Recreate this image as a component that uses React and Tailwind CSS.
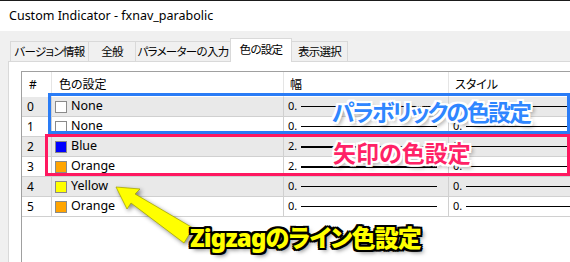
import React from "react";

const rows = [
  { idx: 0, name: "None", swatch: "bg-white", width: "0.", thick: false },
  { idx: 1, name: "None", swatch: "bg-white", width: "0.", thick: false },
  { idx: 2, name: "Blue", swatch: "bg-[#0000ff]", width: "2.", thick: true },
  { idx: 3, name: "Orange", swatch: "bg-[#ffa500]", width: "2.", thick: true },
  { idx: 4, name: "Yellow", swatch: "bg-[#ffff00]", width: "0.", thick: false },
  { idx: 5, name: "Orange", swatch: "bg-[#ffa500]", width: "0.", thick: false },
];

const tabs = [
  { label: "バージョン情報", w: "w-[79px]" },
  { label: "全般", w: "w-[48px]" },
  { label: "パラメーターの入力", w: "w-[96px]" },
];

export default function App() {
  return (
    <div className="relative w-[570px] h-[262px] overflow-hidden bg-[#f0f0f0] text-black font-['Noto_Sans','Noto_Sans_CJK_JP',sans-serif] [font-feature-settings:'palt']">
      <div className="h-px bg-[#1b1b1b]" />
      {/* title bar */}
      <div className="h-[30px] bg-white flex items-center pl-[9px] text-[12.5px]">
        Custom Indicator - fxnav_parabolic
      </div>

      <div className="pl-[8px] pt-[7px]">
        {/* tabs */}
        <div className="flex items-end h-[23px] pl-[2px] text-[11.5px] whitespace-nowrap tracking-[-0.7px]">
          {tabs.map((t) => (
            <div
              key={t.label}
              className={`${t.w} h-[20px] flex items-center justify-center border border-b-0 border-[#d9d9d9] -ml-px first:ml-0 bg-[#f0f0f0]`}
            >
              {t.label}
            </div>
          ))}
          <div className="relative z-10 w-[62px] h-[24px] -mb-px flex items-center justify-center border border-b-0 border-[#d9d9d9] bg-white -ml-px pb-[2px]">
            色の設定
          </div>
          <div className="w-[57px] h-[20px] flex items-center justify-center border border-b-0 border-[#d9d9d9] -ml-px bg-[#f0f0f0]">
            表示選択
          </div>
        </div>

        {/* panel */}
        <div className="h-[210px] bg-white border-l border-t border-[#d9d9d9] pl-[12px] pt-[9px]">
          <div className="w-[600px] h-[200px] border-l border-t border-[#a0a0a0] text-[12px]">
            {/* header */}
            <div className="flex h-[25px] bg-white">
              <div className="w-[30px] border-r border-[#e5e5e5] flex items-center pl-[7px]">#</div>
              <div className="w-[232px] border-r border-[#e5e5e5] flex items-center pl-[7px]">色の設定</div>
              <div className="w-[165px] border-r border-[#e5e5e5] flex items-center pl-[6px]">幅</div>
              <div className="flex-1 flex items-center pl-[6px]">スタイル</div>
            </div>
            {rows.map((r) => (
              <div
                key={r.idx}
                className={`flex h-[20px] border-b border-[#d0d0d0] ${r.idx % 2 === 0 ? "bg-[#e9e9e9]" : "bg-white"}`}
              >
                <div className="w-[30px] border-r border-[#d0d0d0] flex items-center pl-[5px]">{r.idx}</div>
                <div className="w-[232px] border-r border-[#d0d0d0] flex items-center pl-[3px] gap-[4px]">
                  <span className={`w-[12px] h-[12px] border border-[#8a8a8a] ${r.swatch}`} />
                  <span className="text-[12.5px]">{r.name}</span>
                </div>
                <div className="w-[165px] border-r border-[#d0d0d0] flex items-center pl-[4px] gap-[3px] text-[11px]">
                  <span className="w-[10px]">{r.width}</span>
                  <span className={`w-[136px] bg-black ${r.thick ? "h-[2px]" : "h-px"}`} />
                </div>
                <div className="flex-1 flex items-center pl-[4px] gap-[3px] text-[11px]">
                  <span className="w-[10px]">0.</span>
                  <span className="w-[140px] h-px bg-black" />
                </div>
              </div>
            ))}
          </div>
        </div>
      </div>

      {/* annotations */}
      <div className="absolute left-[48px] top-[93px] w-[522px] h-[41px] border-[3px] border-[#2a7cf6]" />
      <div className="absolute left-[45px] top-[134px] w-[525px] h-[42px] border-[3px] border-[#ff1860]" />

      <div className="absolute left-[332px] top-[101px] text-[23px] font-bold leading-none tracking-[-2px] text-[#2f86ff] [text-shadow:2px_0_0_#fff,-2px_0_0_#fff,0_2px_0_#fff,0_-2px_0_#fff,2px_2px_0_#fff,-2px_-2px_0_#fff,2px_-2px_0_#fff,-2px_2px_0_#fff,3px_3px_4px_rgba(0,0,0,0.45)]">
        パラボリックの色設定
      </div>
      <div className="absolute left-[333px] top-[142px] text-[23px] font-bold leading-none text-[#ff2266] [text-shadow:2px_0_0_#fff,-2px_0_0_#fff,0_2px_0_#fff,0_-2px_0_#fff,2px_2px_0_#fff,-2px_-2px_0_#fff,2px_-2px_0_#fff,-2px_2px_0_#fff,3px_3px_4px_rgba(0,0,0,0.45)]">
        矢印の色設定
      </div>

      <svg className="absolute left-0 top-0 w-[570px] h-[262px] pointer-events-none" viewBox="0 0 570 262">
        <polygon
          points="116,187 140,189 135,194 193,228 184,243 131,203 127,209"
          fill="#ffff00"
          stroke="#a8a800"
          strokeWidth="0.8"
          strokeLinejoin="round"
          style={{ filter: "drop-shadow(2px 2px 2px rgba(0,0,0,0.45))" }}
        />
      </svg>

      <div className="absolute left-[190px] top-[226px] text-[24px] font-black leading-none tracking-[-0.8px] text-[#ffff00] [text-shadow:2px_0_0_#000,-2px_0_0_#000,0_2px_0_#000,0_-2px_0_#000,2px_2px_0_#000,-2px_-2px_0_#000,2px_-2px_0_#000,-2px_2px_0_#000,3px_3px_4px_rgba(0,0,0,0.5)]">
        Zigzagのライン色設定
      </div>
    </div>
  );
}
